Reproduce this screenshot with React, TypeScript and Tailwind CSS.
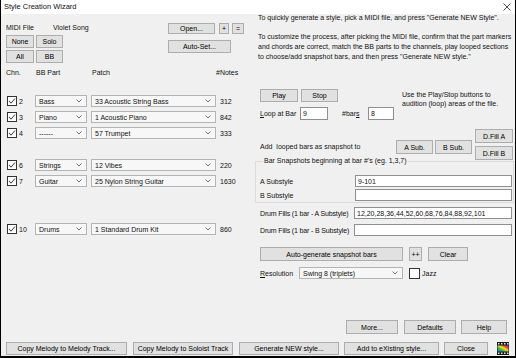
import React from 'react';

const Btn: React.FC<{ className?: string; children: React.ReactNode }> = ({ className = '', children }) => (
  <div className={`flex items-center justify-center bg-[#e1e1e1] border border-[#adadad] text-black whitespace-nowrap ${className}`}>
    {children}
  </div>
);

const Chevron = () => (
  <svg width="6" height="4" viewBox="0 0 6 4" className="shrink-0">
    <polyline points="0.5,0.5 3,3 5.5,0.5" fill="none" stroke="#666" strokeWidth="0.9" />
  </svg>
);

const Select: React.FC<{ value: string; className?: string }> = ({ value, className = '' }) => (
  <div className={`flex items-center justify-between bg-[#f7f7f7] border border-[#b4b4b4] pl-[3px] pr-[4px] h-[12px] ${className}`}>
    <span className="whitespace-nowrap">{value}</span>
    <Chevron />
  </div>
);

const Field: React.FC<{ value?: string; className?: string }> = ({ value = '', className = '' }) => (
  <div className={`flex items-center bg-white border border-[#8f8f8f] px-[2px] whitespace-nowrap ${className}`}>{value}</div>
);

const Check: React.FC<{ checked?: boolean; className?: string }> = ({ checked = true, className = 'w-[10px] h-[10px]' }) => (
  <div className={`bg-white border border-[#333] shrink-0 flex items-center justify-center ${className}`}>
    {checked && (
      <svg width="8" height="8" viewBox="0 0 8 8">
        <polyline points="1,4 3,6.2 7,1.5" fill="none" stroke="#222" strokeWidth="0.9" />
      </svg>
    )}
  </div>
);

const channels: Record<number, { part: string; patch: string; notes: string }> = {
  2: { part: 'Bass', patch: '33 Acoustic String Bass', notes: '312' },
  3: { part: 'Piano', patch: '1 Acoustic Piano', notes: '842' },
  4: { part: '------', patch: '57 Trumpet', notes: '333' },
  6: { part: 'Strings', patch: '12 Vibes', notes: '220' },
  7: { part: 'Guitar', patch: '25 Nylon String Guitar', notes: '1630' },
  10: { part: 'Drums', patch: '1 Standard Drum Kit', notes: '860' },
};

const FilmIcon = () => (
  <svg width="12" height="13" viewBox="0 0 12 13">
    <defs>
      <linearGradient id="rb" x1="0" y1="1" x2="1" y2="0">
        <stop offset="0" stopColor="#1e7be0" />
        <stop offset="0.3" stopColor="#2fb84a" />
        <stop offset="0.55" stopColor="#f2e02a" />
        <stop offset="0.8" stopColor="#e2332a" />
        <stop offset="1" stopColor="#9a3fc4" />
      </linearGradient>
    </defs>
    <rect x="0" y="0" width="12" height="13" fill="#1a1a1a" />
    {[1, 4, 7, 10].map((x) => (
      <rect key={`t${x}`} x={x} y="1" width="1.5" height="1.5" fill="#ddd" />
    ))}
    {[1, 4, 7, 10].map((x) => (
      <rect key={`b${x}`} x={x} y="10.5" width="1.5" height="1.5" fill="#ddd" />
    ))}
    <rect x="0.5" y="3.5" width="11" height="6" fill="url(#rb)" />
  </svg>
);

export default function App() {
  const rows = Array.from({ length: 10 }, (_, i) => i + 1);
  return (
    <div className="w-[516px] h-[358px] overflow-hidden bg-[#f0f0f0] border-x border-b-2 border-black flex flex-col font-['Liberation_Sans',Arial,sans-serif] text-[7px] leading-none text-[#111]">
      {/* title bar */}
      <div className="h-[14px] bg-white flex items-center justify-between pl-[3px] pr-[4px] shrink-0">
        <span className="text-[7.5px]">Style Creation Wizard</span>
        <svg width="8" height="8" viewBox="0 0 8 8">
          <path d="M0.5 0.5 L7.5 7.5 M7.5 0.5 L0.5 7.5" stroke="#222" strokeWidth="0.8" />
        </svg>
      </div>

      <div className="flex-1 flex">
        {/* left panel */}
        <div className="w-[254px] pt-[8px] flex flex-col">
          <div className="flex">
            <div className="w-[167px] pl-[5px]">
              <div className="h-[10px] flex items-center">
                <span className="w-[47px]">MIDI File</span>
                <span>Violet Song</span>
              </div>
              <div className="mt-[3px] flex gap-[2px]">
                <Btn className="w-[28px] h-[13px]">None</Btn>
                <Btn className="w-[27px] h-[13px]">Solo</Btn>
              </div>
              <div className="mt-[2px] flex gap-[2px]">
                <Btn className="w-[28px] h-[13px]">All</Btn>
                <Btn className="w-[27px] h-[13px]">BB</Btn>
              </div>
            </div>
            <div className="pt-[1px]">
              <div className="flex">
                <Btn className="w-[47px] h-[11px] border-[#0078d7]">Open...</Btn>
                <Btn className="ml-[4px] w-[10px] h-[11px]">+</Btn>
                <Btn className="ml-[3px] w-[12px] h-[11px]">=</Btn>
              </div>
              <Btn className="mt-[6px] w-[63px] h-[13px]">Auto-Set...</Btn>
            </div>
          </div>

          <div className="mt-[4px] h-[10px] flex items-center pl-[5px]">
            <span className="w-[30px]">Chn.</span>
            <span className="w-[56px]">BB Part</span>
            <span className="w-[124px]">Patch</span>
            <span>#Notes</span>
          </div>

          {rows.map((ch) => {
            const c = channels[ch];
            return (
              <div key={ch} className="h-[16px] flex items-center pl-[6px]">
                {c && (
                  <>
                    <Check />
                    <span className="ml-[2px] w-[16px]">{ch}</span>
                    <Select value={c.part} className="w-[52px]" />
                    <Select value={c.patch} className="ml-[4px] w-[125px]" />
                    <span className="ml-[4px]">{c.notes}</span>
                  </>
                )}
              </div>
            );
          })}
        </div>

        {/* right panel */}
        <div className="flex-1 flex flex-col">
          <div className="pl-[3px] h-[8px] leading-[8px] whitespace-nowrap">
            To quickly generate a style, pick a MIDI file, and press "Generate NEW Style".
          </div>
          <div className="pl-[3px] mt-[10px] leading-[10px] whitespace-nowrap">
            To customize the process, after picking the MIDI file, confirm that the part markers
            <br />
            and chords are correct, match the BB parts to the channels, play looped sections
            <br />
            to choose/add snapshot bars, and then press "Generate NEW style."
          </div>

          <div className="mt-[27px] h-[13px] flex items-start pl-[5px]">
            <Btn className="w-[38px] h-[13px]">Play</Btn>
            <Btn className="ml-[3px] w-[37px] h-[13px]">Stop</Btn>
            <div className="ml-[64px] mt-[1px] leading-[9px] whitespace-nowrap">
              Use the Play/Stop buttons to
              <br />
              audition (loop) areas of the file.
            </div>
          </div>

          <div className="mt-[5px] h-[13px] flex items-center pl-[5px]">
            <span className="w-[40px]">
              <span className="underline">L</span>oop at Bar
            </span>
            <Field value="9" className="w-[28px] h-[13px]" />
            <span className="ml-[14px] w-[26px]">
              #bar<span className="underline">s</span>
            </span>
            <Field value="8" className="w-[26px] h-[13px]" />
          </div>

          <div className="mt-[9px] flex items-start pl-[5px]">
            <div className="w-[136px] pt-[13px] leading-[10px] whitespace-nowrap">Add&nbsp; looped bars as snapshot to</div>
            <Btn className="mt-[11px] w-[37px] h-[14px]">A Sub.</Btn>
            <Btn className="ml-[2px] mt-[11px] w-[37px] h-[14px]">B Sub.</Btn>
            <div className="ml-[3px] flex flex-col">
              <Btn className="w-[38px] h-[14px]">D.Fill A</Btn>
              <Btn className="mt-[3px] w-[38px] h-[14px]">D.Fill B</Btn>
            </div>
          </div>

          <fieldset className="mt-[-4px] w-[259px] border border-[#dcdcdc] pl-[4px] pb-[1px]">
            <legend className="ml-[3px] px-[1px] leading-[10px]">Bar Snapshots beginning at bar #'s (eg. 1,3,7)</legend>
            <div className="mt-[9px] flex items-center">
              <span className="w-[95px]">A Substyle</span>
              <Field value="9-101" className="w-[157px] h-[12px]" />
            </div>
            <div className="mt-[2px] flex items-center">
              <span className="w-[95px]">B Substyle</span>
              <Field className="w-[157px] h-[12px]" />
            </div>
          </fieldset>

          <div className="mt-[4px] pl-[5px] flex items-center">
            <span className="w-[94px] whitespace-nowrap tracking-[-0.15px]">Drum Fills (1 bar - A Substyle)</span>
            <Field value="12,20,28,36,44,52,60,68,76,84,88,92,101" className="w-[158px] h-[12px]" />
          </div>
          <div className="mt-[5px] pl-[5px] flex items-center">
            <span className="w-[94px] whitespace-nowrap tracking-[-0.15px]">Drum Fills (1 bar - B Substyle)</span>
            <Field className="w-[158px] h-[12px]" />
          </div>

          <div className="mt-[11px] pl-[5px] flex">
            <Btn className="w-[143px] h-[14px]">Auto-generate snapshot bars</Btn>
            <Btn className="ml-[6px] w-[13px] h-[14px]">++</Btn>
            <Btn className="ml-[6px] w-[40px] h-[14px]">Clear</Btn>
          </div>

          <div className="mt-[6px] pl-[5px] flex items-center">
            <span className="w-[39px]">
              <span className="underline">R</span>esolution
            </span>
            <Select value="Swing 8 (triplets)" className="w-[104px]" />
            <Check checked={false} className="ml-[6px] w-[11px] h-[11px]" />
            <span className="ml-[2px]">Jazz</span>
          </div>

          <div className="mt-auto mb-[8px] pl-[91px] flex">
            <Btn className="w-[52px] h-[14px]">More...</Btn>
            <Btn className="ml-[6px] w-[52px] h-[14px]">Defaults</Btn>
            <Btn className="ml-[5px] w-[46px] h-[14px]">Help</Btn>
          </div>
        </div>
      </div>

      {/* bottom buttons */}
      <div className="h-[13px] mb-[1px] pl-[5px] flex items-center shrink-0">
        <Btn className="w-[121px] h-[13px]">Copy Melody to Melody Track...</Btn>
        <Btn className="ml-[6px] w-[100px] h-[13px]">Copy Melody to Soloist Track</Btn>
        <Btn className="ml-[6px] w-[100px] h-[13px]">Generate NEW style...</Btn>
        <Btn className="ml-[5px] w-[95px] h-[13px]">Add to eXisting style...</Btn>
        <Btn className="ml-[5px] w-[44px] h-[13px]">Close</Btn>
        <div className="ml-[9px]">
          <FilmIcon />
        </div>
      </div>
    </div>
  );
}
